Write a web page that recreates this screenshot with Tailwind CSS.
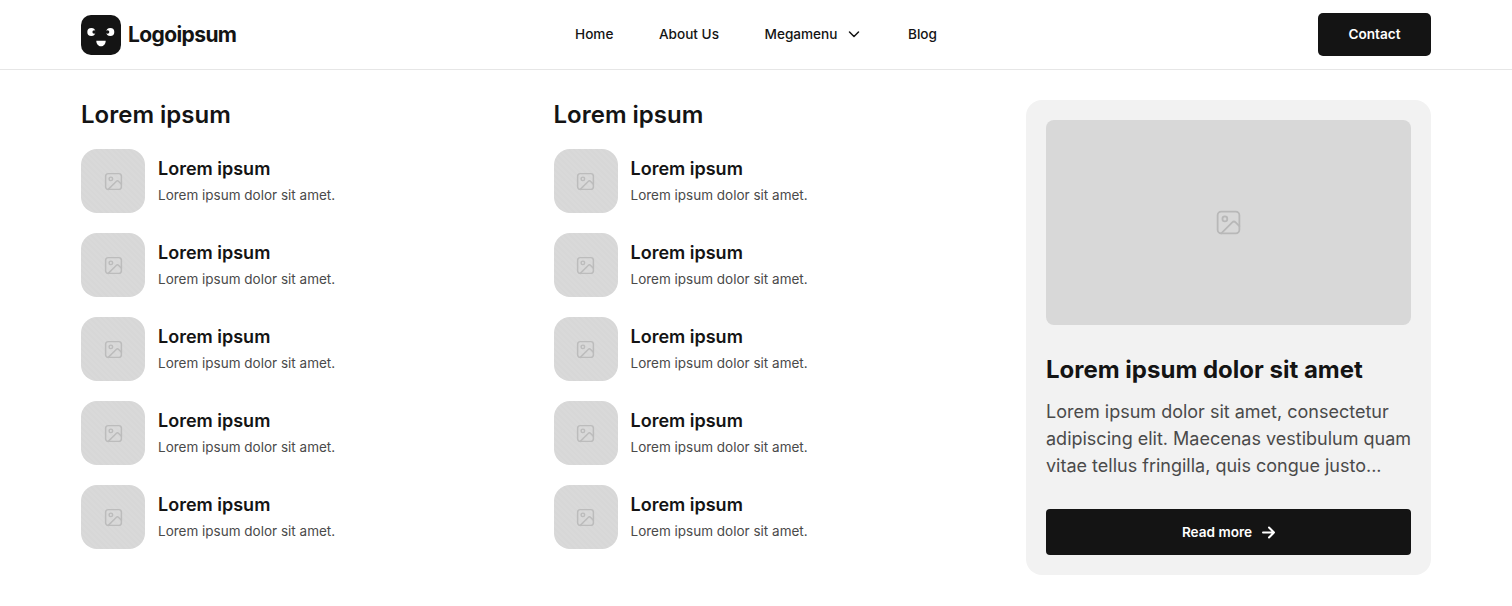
<!DOCTYPE html>
<html lang="en">
<head>
    <meta charset="UTF-8">
    <title>Megamenu</title>
    <script src="https://cdn.jsdelivr.net/npm/@tailwindcss/browser@4"></script>
</head>
<body class="bg-white text-[#141414] font-['Inter',sans-serif] h-[606px] overflow-hidden">
    <!-- Top bar -->
    <header class="h-[70px] border-b border-[#e6e6e6] px-[81px] flex items-center justify-between">
        <a class="flex items-center gap-[7px] w-[237px]">
            <svg width="40" height="40" viewBox="0 0 40 40" class="shrink-0">
                <rect width="40" height="40" rx="10" fill="#141414"/>
                <circle cx="10.300" cy="17" r="4" fill="#fff"/>
                <circle cx="29.300" cy="17" r="4" fill="#fff"/>
                <circle cx="13.200" cy="17" r="1.800" fill="#141414"/>
                <circle cx="26.500" cy="17" r="1.800" fill="#141414"/>
                <path d="M15.300 25.700h9.400c0 3-2 5.600-4.700 5.600s-4.700-2.600-4.700-5.600z" fill="#fff"/>
            </svg>
            <span class="text-[21px] font-bold tracking-[-0.6px] leading-none">Logoipsum</span>
        </a>
        <nav class="flex items-center gap-[45.500px] text-[13.6px] font-[550]">
            <a>Home</a>
            <a>About Us</a>
            <a class="flex items-center gap-[9px]">
                Megamenu
                <svg width="16" height="16" viewBox="0 0 16 16" fill="none" stroke="#141414" stroke-width="1.500" stroke-linecap="round" stroke-linejoin="round"><path d="M3.500 6l4.500 4.500L12.500 6"/></svg>
            </a>
            <a>Blog</a>
        </nav>
        <div class="w-[237px] flex justify-end">
            <button class="w-[113px] h-[43px] bg-[#141414] text-white text-[13.6px] font-semibold rounded-[5px]">Contact</button>
        </div>
    </header>

    <main class="px-[81px] pt-[30px] grid grid-cols-3 gap-x-[67.5px] items-start">
        <section id="col1">
            <h2 class="text-2xl leading-[30px] font-semibold">Lorem ipsum</h2>
            <ul class="mt-[19px] flex flex-col gap-5">
                <li class="flex items-center gap-[13px]">
                    <div class="w-16 h-16 rounded-2xl bg-[repeating-linear-gradient(45deg,#d9d9d9_0,#d9d9d9_2px,#d7d7d7_2px,#d7d7d7_4px)] flex items-center justify-center">
                        <svg width="21" height="21" viewBox="0 0 24 24" fill="none" stroke="#bcbcbc" stroke-width="1.700" stroke-linecap="round" stroke-linejoin="round"><rect x="3" y="3" width="18" height="18" rx="3"/><circle cx="9" cy="9" r="2"/><path d="M21 15l-3.100-3.100a2 2 0 0 0-2.800 0L6 21"/></svg>
                    </div>
                    <div class="pb-px">
                        <h3 class="text-lg leading-[27px] font-semibold">Lorem ipsum</h3>
                        <p class="text-[13.5px] leading-[21px] mt-[3px] text-[#4a4a4a]">Lorem ipsum dolor sit amet.</p>
                    </div>
                </li>
                <li class="flex items-center gap-[13px]">
                    <div class="w-16 h-16 rounded-2xl bg-[repeating-linear-gradient(45deg,#d9d9d9_0,#d9d9d9_2px,#d7d7d7_2px,#d7d7d7_4px)] flex items-center justify-center">
                        <svg width="21" height="21" viewBox="0 0 24 24" fill="none" stroke="#bcbcbc" stroke-width="1.700" stroke-linecap="round" stroke-linejoin="round"><rect x="3" y="3" width="18" height="18" rx="3"/><circle cx="9" cy="9" r="2"/><path d="M21 15l-3.100-3.100a2 2 0 0 0-2.800 0L6 21"/></svg>
                    </div>
                    <div class="pb-px">
                        <h3 class="text-lg leading-[27px] font-semibold">Lorem ipsum</h3>
                        <p class="text-[13.5px] leading-[21px] mt-[3px] text-[#4a4a4a]">Lorem ipsum dolor sit amet.</p>
                    </div>
                </li>
                <li class="flex items-center gap-[13px]">
                    <div class="w-16 h-16 rounded-2xl bg-[repeating-linear-gradient(45deg,#d9d9d9_0,#d9d9d9_2px,#d7d7d7_2px,#d7d7d7_4px)] flex items-center justify-center">
                        <svg width="21" height="21" viewBox="0 0 24 24" fill="none" stroke="#bcbcbc" stroke-width="1.700" stroke-linecap="round" stroke-linejoin="round"><rect x="3" y="3" width="18" height="18" rx="3"/><circle cx="9" cy="9" r="2"/><path d="M21 15l-3.100-3.100a2 2 0 0 0-2.800 0L6 21"/></svg>
                    </div>
                    <div class="pb-px">
                        <h3 class="text-lg leading-[27px] font-semibold">Lorem ipsum</h3>
                        <p class="text-[13.5px] leading-[21px] mt-[3px] text-[#4a4a4a]">Lorem ipsum dolor sit amet.</p>
                    </div>
                </li>
                <li class="flex items-center gap-[13px]">
                    <div class="w-16 h-16 rounded-2xl bg-[repeating-linear-gradient(45deg,#d9d9d9_0,#d9d9d9_2px,#d7d7d7_2px,#d7d7d7_4px)] flex items-center justify-center">
                        <svg width="21" height="21" viewBox="0 0 24 24" fill="none" stroke="#bcbcbc" stroke-width="1.700" stroke-linecap="round" stroke-linejoin="round"><rect x="3" y="3" width="18" height="18" rx="3"/><circle cx="9" cy="9" r="2"/><path d="M21 15l-3.100-3.100a2 2 0 0 0-2.800 0L6 21"/></svg>
                    </div>
                    <div class="pb-px">
                        <h3 class="text-lg leading-[27px] font-semibold">Lorem ipsum</h3>
                        <p class="text-[13.5px] leading-[21px] mt-[3px] text-[#4a4a4a]">Lorem ipsum dolor sit amet.</p>
                    </div>
                </li>
                <li class="flex items-center gap-[13px]">
                    <div class="w-16 h-16 rounded-2xl bg-[repeating-linear-gradient(45deg,#d9d9d9_0,#d9d9d9_2px,#d7d7d7_2px,#d7d7d7_4px)] flex items-center justify-center">
                        <svg width="21" height="21" viewBox="0 0 24 24" fill="none" stroke="#bcbcbc" stroke-width="1.700" stroke-linecap="round" stroke-linejoin="round"><rect x="3" y="3" width="18" height="18" rx="3"/><circle cx="9" cy="9" r="2"/><path d="M21 15l-3.100-3.100a2 2 0 0 0-2.800 0L6 21"/></svg>
                    </div>
                    <div class="pb-px">
                        <h3 class="text-lg leading-[27px] font-semibold">Lorem ipsum</h3>
                        <p class="text-[13.5px] leading-[21px] mt-[3px] text-[#4a4a4a]">Lorem ipsum dolor sit amet.</p>
                    </div>
                </li>
            </ul>
        </section>

        <section id="col2">
            <h2 class="text-2xl leading-[30px] font-semibold">Lorem ipsum</h2>
            <ul class="mt-[19px] flex flex-col gap-5">
                <li class="flex items-center gap-[13px]">
                    <div class="w-16 h-16 rounded-2xl bg-[repeating-linear-gradient(45deg,#d9d9d9_0,#d9d9d9_2px,#d7d7d7_2px,#d7d7d7_4px)] flex items-center justify-center">
                        <svg width="21" height="21" viewBox="0 0 24 24" fill="none" stroke="#bcbcbc" stroke-width="1.700" stroke-linecap="round" stroke-linejoin="round"><rect x="3" y="3" width="18" height="18" rx="3"/><circle cx="9" cy="9" r="2"/><path d="M21 15l-3.100-3.100a2 2 0 0 0-2.800 0L6 21"/></svg>
                    </div>
                    <div class="pb-px">
                        <h3 class="text-lg leading-[27px] font-semibold">Lorem ipsum</h3>
                        <p class="text-[13.5px] leading-[21px] mt-[3px] text-[#4a4a4a]">Lorem ipsum dolor sit amet.</p>
                    </div>
                </li>
                <li class="flex items-center gap-[13px]">
                    <div class="w-16 h-16 rounded-2xl bg-[repeating-linear-gradient(45deg,#d9d9d9_0,#d9d9d9_2px,#d7d7d7_2px,#d7d7d7_4px)] flex items-center justify-center">
                        <svg width="21" height="21" viewBox="0 0 24 24" fill="none" stroke="#bcbcbc" stroke-width="1.700" stroke-linecap="round" stroke-linejoin="round"><rect x="3" y="3" width="18" height="18" rx="3"/><circle cx="9" cy="9" r="2"/><path d="M21 15l-3.100-3.100a2 2 0 0 0-2.800 0L6 21"/></svg>
                    </div>
                    <div class="pb-px">
                        <h3 class="text-lg leading-[27px] font-semibold">Lorem ipsum</h3>
                        <p class="text-[13.5px] leading-[21px] mt-[3px] text-[#4a4a4a]">Lorem ipsum dolor sit amet.</p>
                    </div>
                </li>
                <li class="flex items-center gap-[13px]">
                    <div class="w-16 h-16 rounded-2xl bg-[repeating-linear-gradient(45deg,#d9d9d9_0,#d9d9d9_2px,#d7d7d7_2px,#d7d7d7_4px)] flex items-center justify-center">
                        <svg width="21" height="21" viewBox="0 0 24 24" fill="none" stroke="#bcbcbc" stroke-width="1.700" stroke-linecap="round" stroke-linejoin="round"><rect x="3" y="3" width="18" height="18" rx="3"/><circle cx="9" cy="9" r="2"/><path d="M21 15l-3.100-3.100a2 2 0 0 0-2.800 0L6 21"/></svg>
                    </div>
                    <div class="pb-px">
                        <h3 class="text-lg leading-[27px] font-semibold">Lorem ipsum</h3>
                        <p class="text-[13.5px] leading-[21px] mt-[3px] text-[#4a4a4a]">Lorem ipsum dolor sit amet.</p>
                    </div>
                </li>
                <li class="flex items-center gap-[13px]">
                    <div class="w-16 h-16 rounded-2xl bg-[repeating-linear-gradient(45deg,#d9d9d9_0,#d9d9d9_2px,#d7d7d7_2px,#d7d7d7_4px)] flex items-center justify-center">
                        <svg width="21" height="21" viewBox="0 0 24 24" fill="none" stroke="#bcbcbc" stroke-width="1.700" stroke-linecap="round" stroke-linejoin="round"><rect x="3" y="3" width="18" height="18" rx="3"/><circle cx="9" cy="9" r="2"/><path d="M21 15l-3.100-3.100a2 2 0 0 0-2.800 0L6 21"/></svg>
                    </div>
                    <div class="pb-px">
                        <h3 class="text-lg leading-[27px] font-semibold">Lorem ipsum</h3>
                        <p class="text-[13.5px] leading-[21px] mt-[3px] text-[#4a4a4a]">Lorem ipsum dolor sit amet.</p>
                    </div>
                </li>
                <li class="flex items-center gap-[13px]">
                    <div class="w-16 h-16 rounded-2xl bg-[repeating-linear-gradient(45deg,#d9d9d9_0,#d9d9d9_2px,#d7d7d7_2px,#d7d7d7_4px)] flex items-center justify-center">
                        <svg width="21" height="21" viewBox="0 0 24 24" fill="none" stroke="#bcbcbc" stroke-width="1.700" stroke-linecap="round" stroke-linejoin="round"><rect x="3" y="3" width="18" height="18" rx="3"/><circle cx="9" cy="9" r="2"/><path d="M21 15l-3.100-3.100a2 2 0 0 0-2.800 0L6 21"/></svg>
                    </div>
                    <div class="pb-px">
                        <h3 class="text-lg leading-[27px] font-semibold">Lorem ipsum</h3>
                        <p class="text-[13.5px] leading-[21px] mt-[3px] text-[#4a4a4a]">Lorem ipsum dolor sit amet.</p>
                    </div>
                </li>
            </ul>
        </section>

        <!-- Feature card -->
        <aside class="bg-[#f2f2f2] rounded-2xl p-5 h-[475px] flex flex-col">
            <div class="h-[205px] rounded-lg bg-[#d8d8d8] flex items-center justify-center">
                <svg width="29" height="29" viewBox="0 0 24 24" fill="none" stroke="#b8b8b8" stroke-width="1.500" stroke-linecap="round" stroke-linejoin="round"><rect x="3" y="3" width="18" height="18" rx="3"/><circle cx="9" cy="9" r="2"/><path d="M21 15l-3.100-3.100a2 2 0 0 0-2.800 0L6 21"/></svg>
            </div>
            <h3 class="mt-[27px] text-2xl leading-[36px] font-bold">Lorem ipsum dolor sit amet</h3>
            <p class="mt-[10px] text-lg leading-[27px] text-[#4a4a4a] whitespace-nowrap">Lorem ipsum dolor sit amet, consectetur<br>adipiscing elit. Maecenas vestibulum quam<br>vitae tellus fringilla, quis congue justo...</p>
            <button class="mt-auto h-[46px] bg-[#141414] text-white text-[13.6px] font-semibold rounded-[4px] flex items-center justify-center gap-[10px]">
                Read more
                <svg width="13" height="13" viewBox="1.500 1.500 13 13" fill="none" stroke="#fff" stroke-width="2" stroke-linecap="round" stroke-linejoin="round"><path d="M2.500 8h11M8.500 3l5 5-5 5"/></svg>
            </button>
        </aside>
    </main>
</body>
</html>
